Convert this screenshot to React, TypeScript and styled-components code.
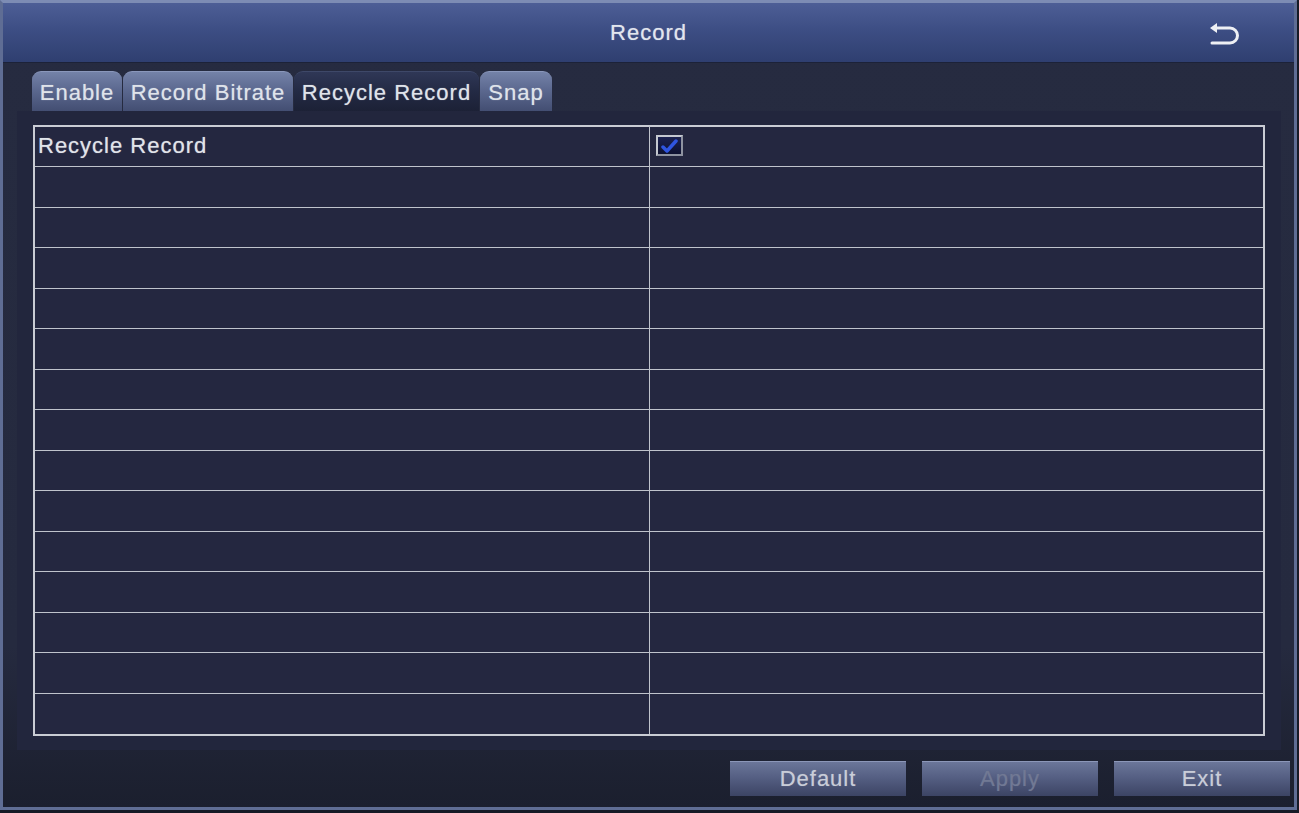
import styled, { createGlobalStyle } from 'styled-components';

const Global = createGlobalStyle`
  html, body {
    margin: 0;
    padding: 0;
    background: #161a26;
  }
  body {
    font-family: 'Liberation Sans', Arial, sans-serif;
  }
`;

const Window = styled.div`
  box-sizing: border-box;
  width: 1297px;
  height: 810px;
  border: 3px solid #5f6d94;
  border-top-color: #7d8cb4;
  display: flex;
  flex-direction: column;
  background: linear-gradient(to bottom, #262b40 0%, #252a3f 80%, #1b1f2e 100%);
`;

const Header = styled.div`
  height: 59px;
  flex: none;
  display: flex;
  align-items: center;
  justify-content: center;
  position: relative;
  background: linear-gradient(to bottom, #4d5e96 0%, #3d4e84 45%, #2f3f70 100%);
  border-bottom: 1px solid #1c2238;
`;

const Title = styled.div`
  font-size: 22px;
  letter-spacing: 1px;
  color: #e2e6ee;
  text-shadow: 0 0 1px rgba(226, 230, 238, 0.6);
`;

const BackButton = styled.div`
  position: absolute;
  right: 54px;
  top: 19px;
  width: 32px;
  height: 24px;
`;

const Body = styled.div`
  display: flex;
  flex-direction: column;
  padding: 8px 13px 0 14px;
`;

const TabBar = styled.div`
  display: flex;
  gap: 1px;
  padding-left: 15px;
  height: 40px;
`;

const Tab = styled.div<{ $active?: boolean; $width: number }>`
  box-sizing: border-box;
  height: 40px;
  padding: 8px 0 0;
  width: ${(p) => p.$width}px;
  text-align: center;
  font-size: 22px;
  letter-spacing: 1px;
  color: #dfe3ea;
  text-shadow: 0 0 1px rgba(223, 227, 234, 0.6);
  border-radius: 9px 9px 0 0;
  border-top: 1px solid ${(p) => (p.$active ? '#3e4868' : '#8a97bb')};
  background: ${(p) =>
    p.$active
      ? 'linear-gradient(to bottom, #2f3756 0%, #232a44 50%, #1c2136 100%)'
      : 'linear-gradient(to bottom, #7482a8 0%, #5c6990 45%, #434e72 100%)'};
  white-space: nowrap;
`;

const Panel = styled.div`
  height: 639px;
  background: #22263d;
  padding: 14px 16px 14px 16px;
  box-sizing: border-box;
`;

const Table = styled.div`
  box-sizing: border-box;
  height: 100%;
  border: 2px solid #c9ccd4;
  display: grid;
  grid-template-columns: 614px 1fr;
  grid-template-rows: repeat(15, 1fr);
  background: #242740;
`;

const Cell = styled.div<{ $right?: boolean; $last?: boolean }>`
  border-bottom: ${(p) => (p.$last ? 'none' : '1px solid #bfc3cc')};
  border-left: ${(p) => (p.$right ? '1px solid #bfc3cc' : 'none')};
  display: flex;
  align-items: center;
  padding-left: ${(p) => (p.$right ? '6px' : '3px')};
  font-size: 22px;
  letter-spacing: 1px;
  color: #e1e4ea;
  text-shadow: 0 0 1px rgba(225, 228, 234, 0.6);
  margin-top: -1px;
`;

const CheckBox = styled.div`
  box-sizing: border-box;
  width: 27px;
  height: 21px;
  margin-top: -2px;
  border: 2px solid #c4c8d0;
  border-right-color: #8e93a0;
  border-bottom-color: #8e93a0;
  background: linear-gradient(to bottom, #1b2150 0%, #0e1230 100%);
  display: flex;
  align-items: center;
  justify-content: center;
`;

const Footer = styled.div`
  flex: 1;
  display: flex;
  justify-content: flex-end;
  align-items: flex-start;
  gap: 16px;
  padding: 11px 4px 0 0;
`;

const Button = styled.div<{ $disabled?: boolean }>`
  width: 176px;
  height: 35px;
  box-sizing: border-box;
  border-top: 1px solid #8c97b8;
  background: linear-gradient(to bottom, #6b7699 0%, #555f83 45%, #3c4464 100%);
  display: flex;
  align-items: center;
  justify-content: center;
  font-size: 22px;
  letter-spacing: 1px;
  color: ${(p) => (p.$disabled ? '#717994' : '#c9cdd8')};
  text-shadow: 0 0 1px ${(p) => (p.$disabled ? 'rgba(113,121,148,0.5)' : 'rgba(201,205,216,0.5)')};
`;

const tabs = [
  { label: 'Enable', width: 90 },
  { label: 'Record Bitrate', width: 170 },
  { label: 'Recycle Record', width: 185, active: true },
  { label: 'Snap', width: 72 },
];

const BackIcon = () => (
  <svg width="32" height="24" viewBox="0 0 32 24">
    <path d="M2 6 L9 1 L9 11 Z" fill="#eef0f4" />
    <path
      d="M8 6 H22 A7.5 7.5 0 0 1 22 21 H4"
      fill="none"
      stroke="#eef0f4"
      strokeWidth="3"
      strokeLinecap="round"
    />
  </svg>
);

const Check = () => (
  <svg width="21" height="15" viewBox="0 0 21 15">
    <path d="M4 9 L8 13 L17 3" fill="none" stroke="#2f55e0" strokeWidth="3.5" strokeLinecap="round" strokeLinejoin="round" />
  </svg>
);

export default function App() {
  const rows = Array.from({ length: 15 }, (_, i) => i);
  return (
    <>
      <Global />
      <Window>
        <Header>
          <Title>Record</Title>
          <BackButton>
            <BackIcon />
          </BackButton>
        </Header>
        <Body>
          <TabBar>
            {tabs.map((t) => (
              <Tab key={t.label} $active={t.active} $width={t.width}>
                {t.label}
              </Tab>
            ))}
          </TabBar>
          <Panel>
            <Table>
              {rows.flatMap((i) => [
                <Cell key={`l${i}`} $last={i === 14}>
                  {i === 0 ? 'Recycle Record' : ''}
                </Cell>,
                <Cell key={`r${i}`} $right $last={i === 14}>
                  {i === 0 ? (
                    <CheckBox>
                      <Check />
                    </CheckBox>
                  ) : null}
                </Cell>,
              ])}
            </Table>
          </Panel>
        </Body>
        <Footer>
          <Button>Default</Button>
          <Button $disabled>Apply</Button>
          <Button>Exit</Button>
        </Footer>
      </Window>
    </>
  );
}
